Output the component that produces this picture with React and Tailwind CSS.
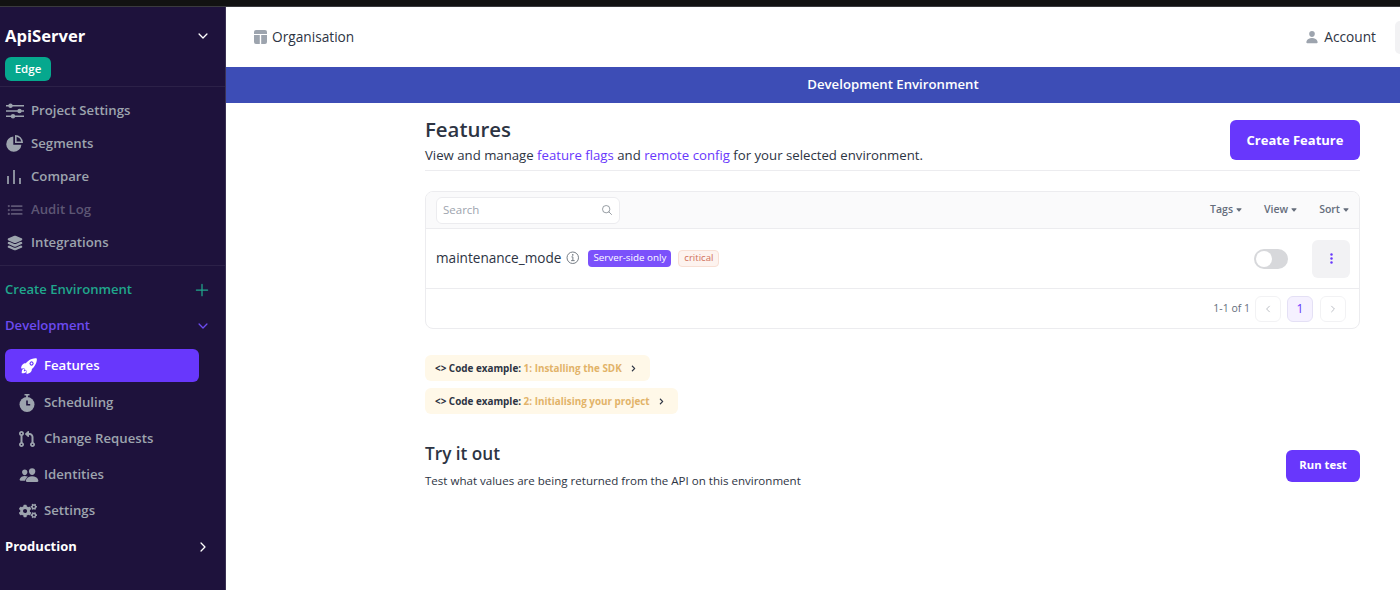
import React from 'react';
import {
  IoList,
  IoLayers,
  IoRocket,
  IoPeople,
  IoPerson,
  IoChevronDown,
  IoChevronForward,
  IoChevronBack,
  IoSearchOutline,
  IoInformationCircleOutline,
  IoEllipsisVertical,
  IoAdd,
  IoCaretDown,
} from 'react-icons/io5';
import { FaCogs, FaChevronRight } from 'react-icons/fa';
import { FaCodePullRequest } from 'react-icons/fa6';

const SlidersIcon = () => (
  <svg width="18" height="16" viewBox="0 0 18 16" fill="currentColor">
    <path d="M0 2h18v1.4H0zM0 7.3h18v1.4H0zM0 12.6h18V14H0z" />
    <circle cx="4.5" cy="2.7" r="2.2" />
    <circle cx="13.5" cy="8" r="2.2" />
    <circle cx="7" cy="13.3" r="2.2" />
  </svg>
);

const PieIcon = () => (
  <svg width="17" height="17" viewBox="0 0 17 17" fill="currentColor">
    <path d="M7.3 1.6A7.6 7.6 0 1 0 15.4 9.7H7.3z" />
    <path fillRule="evenodd" d="M9 0a8 8 0 0 1 8 8H9zM10.6 1.8v4.6h4.6a6.4 6.4 0 0 0-4.6-4.6z" />
  </svg>
);

const CompareIcon = () => (
  <svg width="16" height="16" viewBox="0 0 16 16" fill="none" stroke="currentColor" strokeWidth="1.7">
    <path d="M2 7v8M8 1v14M14 9v6" />
  </svg>
);

const StopwatchIcon = () => (
  <svg width="16" height="18" viewBox="0 0 16 18">
    <path d="M5.5 0h5v1.6H8.9v2H7.1v-2H5.5z" fill="currentColor" />
    <circle cx="8" cy="10.5" r="7.5" fill="currentColor" />
    <path d="M8 6.5v4.2h3.2" fill="none" stroke="#1e123c" strokeWidth="1.6" />
  </svg>
);

const OrgIcon = () => (
  <svg width="13" height="14" viewBox="0 0 13 14" fill="#9da4ae">
    <path d="M2 0h9a2 2 0 0 1 2 2v2H0V2a2 2 0 0 1 2-2z" />
    <path d="M0 5h5.8v9H2a2 2 0 0 1-2-2zM7.2 5H13v7a2 2 0 0 1-2 2H7.2z" />
  </svg>
);

const projectLinks = [
  { label: 'Project Settings', icon: <SlidersIcon /> },
  { label: 'Segments', icon: <PieIcon /> },
  { label: 'Compare', icon: <CompareIcon /> },
  { label: 'Audit Log', icon: <IoList size={18} />, disabled: true },
  { label: 'Integrations', icon: <IoLayers size={18} /> },
];

const envLinks = [
  { label: 'Scheduling', icon: <StopwatchIcon /> },
  { label: 'Change Requests', icon: <FaCodePullRequest size={16} /> },
  { label: 'Identities', icon: <IoPeople size={20} /> },
  { label: 'Settings', icon: <FaCogs size={18} /> },
];

const Sidebar = () => (
  <aside className="w-[226px] shrink-0 bg-[#1e123c] border-r border-[#3a3154] flex flex-col">
    <div className="h-[80px] pl-[5px] pr-4 pt-[17px] border-b border-[#2c2148]">
      <div className="flex items-center justify-between h-6">
        <span className="text-[16.6px] font-bold text-white">ApiServer</span>
        <IoChevronDown size={14} className="text-white -mr-[1px]" />
      </div>
      <span className="mt-[9px] flex w-[46px] h-6 items-center justify-center rounded-md bg-[#06a88e] text-[11.5px] font-semibold text-white">
        Edge
      </span>
    </div>

    <nav className="h-[179px] pt-[7px] border-b border-[#2c2148]">
      {projectLinks.map((link) => (
        <div
          key={link.label}
          className={`h-[33px] flex items-center text-[13.2px] font-semibold ${link.disabled ? 'text-[#5d5674]' : 'text-[#9da4ae]'}`}
        >
          <span className="w-[31px] pl-[6px] flex items-center">{link.icon}</span>
          {link.label}
        </div>
      ))}
    </nav>

    <div className="mt-[12px] h-[24px] pl-[5px] pr-4 flex items-center justify-between text-[13.1px] font-semibold text-[#20a78c]">
      Create Environment
      <IoAdd size={20} className="text-[#20a78c] -mr-[3px]" />
    </div>

    <div className="mt-[12px] h-[24px] pl-[5px] pr-4 flex items-center justify-between text-[13.1px] font-semibold text-[#6c4bf0]">
      Development
      <IoChevronDown size={14} className="-mr-[1px]" />
    </div>

    <div className="mt-[11px] ml-[5px] w-[194px] h-[33px] rounded-md bg-[#6837fc] flex items-center text-[13.2px] font-semibold text-white">
      <span className="w-[39px] pl-[15px] flex items-center"><IoRocket size={18} /></span>
      Features
    </div>

    <div className="mt-[3px]">
      {envLinks.map((link) => (
        <div key={link.label} className="h-[36px] flex items-center text-[13.2px] font-semibold text-[#9da4ae]">
          <span className="w-[44px] pl-[19px] flex items-center">{link.icon}</span>
          {link.label}
        </div>
      ))}
    </div>

    <div className="h-[36px] pl-[5px] pr-4 flex items-center justify-between text-[13px] font-bold text-white">
      Production
      <IoChevronForward size={14} className="-mr-[1px]" />
    </div>
  </aside>
);

const TopBar = () => (
  <header className="h-[60px] flex items-center justify-between pl-[28px]">
    <div className="flex items-center gap-[5px] text-[13.7px] font-medium text-[#2d3443]">
      <OrgIcon />
      Organisation
    </div>
    <div className="flex items-center">
      <span className="flex items-center gap-[5px] text-[13.7px] font-medium text-[#2d3443]">
        <IoPerson size={14} className="text-[#9da4ae]" />
        Account
      </span>
      <span className="ml-[19px] w-[5px] h-[33px] rounded-l-md bg-[#f2f2f4]" />
    </div>
  </header>
);

const CodeExample = ({ num, title }) => (
  <div className="h-[26px] w-fit rounded-md bg-[#fff8e8] pl-[10px] pr-[13px] flex items-center text-[9.9px] font-bold text-[#2d3443]">
    <span>&lt;&gt; Code example:&nbsp;</span>
    <span className="text-[#e2b368]">{num}: {title}</span>
    <FaChevronRight size={7} className="ml-[8px] text-[#2d3443]" />
  </div>
);

const FeaturesPanel = () => (
  <div className="mt-[20px] h-[138px] rounded-lg border border-[#ececef] overflow-hidden">
    <div className="h-[37px] bg-[#fafafb] border-b border-[#ececef] flex items-center justify-between pl-[10px] pr-[9px]">
      <div className="w-[184px] h-[27px] rounded-md border border-[#ececef] bg-white flex items-center justify-between px-[6px] text-[11.5px] text-[#9da4ae]">
        Search
        <IoSearchOutline size={12} className="text-[#767d85]" />
      </div>
      <div className="flex items-center gap-[21px] text-[10.5px] font-semibold text-[#656d7b]">
        {['Tags', 'View', 'Sort'].map((label) => (
          <span key={label} className="flex items-center gap-[2px]">
            {label}
            <IoCaretDown size={8} />
          </span>
        ))}
      </div>
    </div>

    <div className="h-[60px] border-b border-[#ececef] flex items-center justify-between pl-[10px] pr-[9px]">
      <div className="flex items-center">
        <span className="text-[13.6px] font-medium text-[#2d3443]">maintenance_mode</span>
        <IoInformationCircleOutline size={16} className="ml-[4px] text-[#767d85]" />
        <span className="ml-[7px] h-[17px] px-[5px] rounded bg-[#7b51fb] flex items-center text-[9.8px] font-medium text-white">
          Server-side only
        </span>
        <span className="ml-[7px] h-[17px] px-[5px] rounded border border-[#f8dfd4] bg-[#fdf3ef] flex items-center text-[9.6px] text-[#d0705a]">
          critical
        </span>
      </div>
      <div className="flex items-center">
        <span className="w-[34px] h-[20px] rounded-full bg-[#d7d8db] p-[2px]">
          <span className="block w-[16px] h-[16px] rounded-full bg-white" />
        </span>
        <span className="ml-[24px] w-[38px] h-[38px] rounded-md bg-[#f2f2f4] flex items-center justify-center">
          <IoEllipsisVertical size={13} className="text-[#6837fc]" />
        </span>
      </div>
    </div>

    <div className="h-[39px] flex items-center justify-end pr-[13px] text-[10.5px] text-[#656d7b]">
      <span className="mr-[5px]">1-1 of 1</span>
      <span className="w-[26px] h-[26px] rounded-md border border-[#f2f2f4] flex items-center justify-center text-[#b7bbc1]">
        <IoChevronBack size={10} />
      </span>
      <span className="ml-[6px] w-[26px] h-[26px] rounded-md border border-[#e4e0f5] bg-[#f5f1ff] flex items-center justify-center text-[12px] text-[#6837fc]">
        1
      </span>
      <span className="ml-[7px] w-[26px] h-[26px] rounded-md border border-[#f2f2f4] flex items-center justify-center text-[#b7bbc1]">
        <IoChevronForward size={10} />
      </span>
    </div>
  </div>
);

const App = () => (
  <div className="h-[590px] overflow-hidden bg-white flex flex-col font-['Open_Sans',sans-serif]">
    <div className="h-[7px] shrink-0 bg-[#121212] border-b border-[#3a3a3e]" />
    <div className="flex flex-1 min-h-0">
      <Sidebar />
      <main className="flex-1 min-w-0">
        <TopBar />
        <div className="h-[36px] pl-[160px] bg-[#3d4db6] flex items-center justify-center text-[13.2px] font-semibold text-white">
          Development Environment
        </div>

        <div className="ml-[199px] mr-[40px]">
          <div className="h-[68px] border-b border-[#ececef] flex justify-between pt-[17px]">
            <div>
              <h1 className="text-[20.4px] leading-[18px] font-semibold text-[#2d3443]">Features</h1>
              <p className="mt-[7px] text-[13.2px] leading-[20px] text-[#2d3443]">
                View and manage <span className="text-[#6837fc]">feature flags</span> and{' '}
                <span className="text-[#6837fc]">remote config</span> for your selected environment.
              </p>
            </div>
            <button className="w-[130px] h-[40px] pt-[1px] rounded-md bg-[#6837fc] text-[13px] font-bold text-white">
              Create Feature
            </button>
          </div>

          <FeaturesPanel />

          <div className="mt-[26px] flex flex-col gap-[7px]">
            <CodeExample num="1" title="Installing the SDK" />
            <CodeExample num="2" title="Initialising your project" />
          </div>

          <div className="mt-[29px] flex justify-between items-center">
            <div>
              <h2 className="text-[17.2px] leading-[22px] font-semibold text-[#2d3443]">Try it out</h2>
              <p className="mt-[7px] text-[11.55px] leading-[18px] text-[#2d3443]">
                Test what values are being returned from the API on this environment
              </p>
            </div>
            <button className="w-[74px] h-[32px] mb-[2px] rounded-md bg-[#6837fc] text-[11.3px] font-bold text-white">
              Run test
            </button>
          </div>
        </div>
      </main>
    </div>
  </div>
);

export default App;
